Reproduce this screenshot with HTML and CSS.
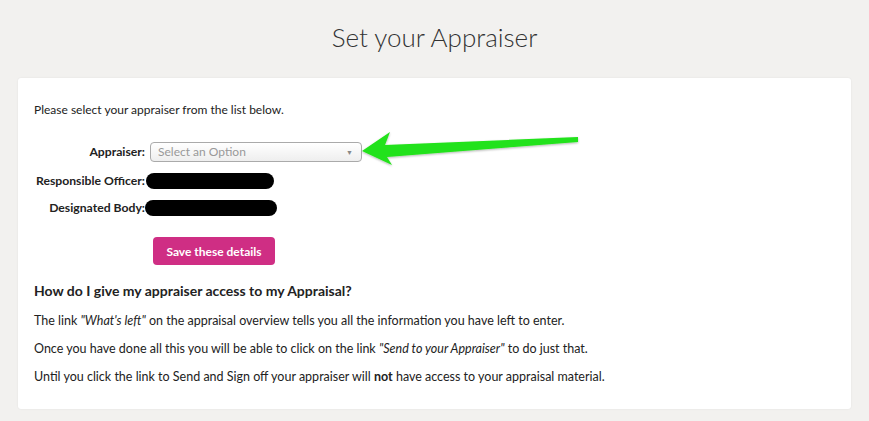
FILE: index.html
```html
<!DOCTYPE html>
<html lang="en">
<head>
  <meta charset="UTF-8" />
  <title>Set your Appraiser</title>
  <link rel="stylesheet" href="styles.css">
</head>
<body>
  <h1>Set your Appraiser</h1>

  <div class="card">
    <p class="intro">Please select your appraiser from the list below.</p>

    <div class="form">
      <label>Appraiser:</label>
      <div class="select">
        <span>Select an Option</span>
        <span class="caret">▼</span>
      </div>

      <label>Responsible Officer:</label>
      <div><span class="redact r1"></span></div>

      <label>Designated Body:</label>
      <div><span class="redact r2"></span></div>
    </div>

    <button class="save">Save these details</button>

    <h2>How do I give my appraiser access to my Appraisal?</h2>
    <p>The link <em>"What's left"</em> on the appraisal overview tells you all the information you have left to enter.</p>
    <p>Once you have done all this you will be able to click on the link <em>"Send to your Appraiser"</em> to do just that.</p>
    <p>Until you click the link to Send and Sign off your appraiser will <strong>not</strong> have access to your appraisal material.</p>

    <!-- annotation arrow -->
    <svg class="arrow" width="240" height="50" viewBox="0 0 240 50">
      <defs>
        <filter id="sh" x="-10%" y="-30%" width="120%" height="160%">
          <feDropShadow dx="0" dy="1" stdDeviation="1" flood-color="#000" flood-opacity="0.3"/>
        </filter>
      </defs>
      <polygon filter="url(#sh)" fill="#22e21a"
        points="2,22 30,3 25,16 218,8 218,13 27,28 32,36"/>
    </svg>
  </div>
</body>
</html>
```

FILE: styles.css
```css
* {
  box-sizing: border-box;
  margin: 0;
  padding: 0;
}

body {
  background-color: #f2f1ef;
  color: #222;
  font-family: Lato, 'Open Sans', sans-serif;
  font-size: 12px;
  line-height: 16px;
  padding: 0 18px 12px;
}

h1 {
  text-align: center;
  font-weight: 300;
  font-size: 26px;
  line-height: 34px;
  color: #333;
  padding: 20px 0 24px;
}

.card {
  position: relative;
  background: #fff;
  border-radius: 3px;
  box-shadow: 0 0 2px rgba(0, 0, 0, 0.08);
  padding: 24px 16px 24px;
  height: 331px;
}

.intro {
  margin-bottom: 24px;
}

.form {
  display: grid;
  grid-template-columns: 111px auto;
  column-gap: 5px;
  row-gap: 11px;
  align-items: center;
}

.form label {
  text-align: right;
  font-weight: 700;
  font-size: 12.2px;
}

.select {
  width: 212px;
  height: 20px;
  border: 1px solid #aaa;
  border-radius: 4px;
  background: linear-gradient(#fff, #eee);
  color: #999;
  padding: 0 8px 0 7px;
  display: flex;
  justify-content: space-between;
  align-items: center;
}

.caret {
  font-size: 7px;
  color: #888;
}

.redact {
  display: block;
  height: 16px;
  background: #000;
  border-radius: 8px;
  margin-left: -4px;
}

.r1 {
  width: 128px;
}

.r2 {
  width: 132px;
  margin-left: -5px;
}

.save {
  display: block;
  margin: 21px 0 0 119px;
  width: 122px;
  height: 28px;
  border: none;
  border-radius: 4px;
  background: #cf2e84;
  color: #fff;
  font-family: inherit;
  font-weight: 700;
  font-size: 12px;
}

h2 {
  font-size: 14px;
  line-height: 20px;
  font-weight: 700;
  margin: 16px 0 12px;
}

h2 ~ p {
  font-size: 12.5px;
}

.card p + p,
h2 + p {
  margin-top: 12px;
}

em {
  font-style: italic;
}

.arrow {
  position: absolute;
  left: 342px;
  top: 51px;
}
```
